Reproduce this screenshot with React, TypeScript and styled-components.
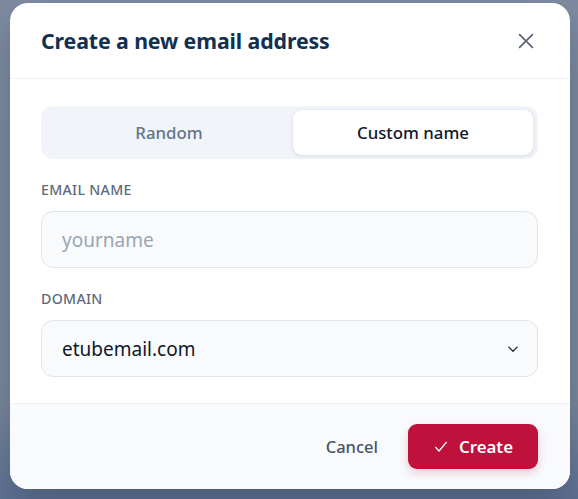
import styled, { createGlobalStyle } from "styled-components";
import { useState } from "react";

const GlobalStyle = createGlobalStyle`
  html, body {
    margin: 0;
    padding: 0;
  }
  body {
    background: linear-gradient(180deg, #7f8ba0 0%, #7c899d 80%, #5f7394 100%);
    font-family: "Noto Sans", "Open Sans", Arial, sans-serif;
    min-height: 499px;
  }
  * {
    box-sizing: border-box;
  }
`;

const DOMAINS = ["etubemail.com"];

function App() {
  const [mode, setMode] = useState<"random" | "custom">("custom");

  return (
    <>
      <GlobalStyle />
      <Modal>
        <Header>
          <Title>Create a new email address</Title>
          <CloseButton aria-label="Close">
            <svg width="22" height="22" viewBox="0 0 24 24" fill="none">
              <path
                d="M5 5l14 14M19 5L5 19"
                stroke="#5b6472"
                strokeWidth="1.9"
                strokeLinecap="round"
              />
            </svg>
          </CloseButton>
        </Header>
        <Body>
          <Segment>
            <SegmentTab $active={mode === "random"} onClick={() => setMode("random")}>
              Random
            </SegmentTab>
            <SegmentTab $active={mode === "custom"} onClick={() => setMode("custom")}>
              Custom name
            </SegmentTab>
          </Segment>
          <Field>
            <Label>Email name</Label>
            <Input placeholder="yourname" />
          </Field>
          <Field>
            <Label>Domain</Label>
            <SelectWrap>
              <Select defaultValue={DOMAINS[0]}>
                {DOMAINS.map((d) => (
                  <option key={d}>{d}</option>
                ))}
              </Select>
              <Chevron width="18" height="18" viewBox="0 0 24 24" fill="none">
                <path
                  d="M6.5 9.5l5.5 5.5 5.5-5.5"
                  stroke="#1e293b"
                  strokeWidth="1.8"
                  strokeLinecap="round"
                  strokeLinejoin="round"
                />
              </Chevron>
            </SelectWrap>
          </Field>
        </Body>
        <Footer>
          <CancelButton>Cancel</CancelButton>
          <CreateButton>
            <svg width="16" height="16" viewBox="0 0 24 24" fill="none">
              <path
                d="M4 12.5l5 5.5L20 5"
                stroke="#fff"
                strokeWidth="2"
                strokeLinecap="round"
                strokeLinejoin="round"
              />
            </svg>
            Create
          </CreateButton>
        </Footer>
      </Modal>
    </>
  );
}

const Modal = styled.div`
  margin: 3px 0 0 10px;
  width: 560px;
  height: 486px;
  background: #ffffff;
  border-radius: 18px;
  overflow: hidden;
  display: flex;
  flex-direction: column;
  box-shadow: 0 20px 40px rgba(15, 23, 42, 0.25);
`;

const Header = styled.div`
  height: 76px;
  display: flex;
  align-items: center;
  justify-content: space-between;
  padding: 0 33px 0 31px;
  border-bottom: 1px solid #eef1f5;
`;

const Title = styled.h2`
  margin: 0;
  font-size: 21.3px;
  font-weight: 700;
  color: #12304f;
  letter-spacing: -0.1px;
`;

const CloseButton = styled.button`
  border: none;
  background: none;
  padding: 0;
  width: 22px;
  height: 22px;
  display: flex;
  align-items: center;
  justify-content: center;
  cursor: pointer;
`;

const Body = styled.div`
  flex: 1;
  padding: 27px 32px 0 31px;
  display: flex;
  flex-direction: column;
  gap: 21px;
`;

const Segment = styled.div`
  display: grid;
  grid-template-columns: 1fr 240px;
  height: 53px;
  padding: 4px 5px 4px 4px;
  background: #f1f5f9;
  border-radius: 12px;
`;

const SegmentTab = styled.button<{ $active: boolean }>`
  border: none;
  border-radius: 9px;
  font-family: inherit;
  font-size: 16.8px;
  font-weight: 500;
  cursor: pointer;
  background: ${(p) => (p.$active ? "#ffffff" : "transparent")};
  color: ${(p) => (p.$active ? "#0f172a" : "#64748b")};
  box-shadow: ${(p) =>
    p.$active ? "0 1px 4px rgba(15, 23, 42, 0.12)" : "none"};
`;

const Field = styled.div`
  display: flex;
  flex-direction: column;
  gap: 11px;
`;

const Label = styled.label`
  font-size: 14.2px;
  font-weight: 500;
  text-transform: uppercase;
  color: #5e6a7b;
  line-height: 20px;
  letter-spacing: 0.3px;
`;

const fieldBox = `
  width: 100%;
  height: 57px;
  border: 1.5px solid #dfe5ec;
  border-radius: 12px;
  background: #f8fafc;
  padding: 0 20px;
  font-family: inherit;
  font-size: 19px;
  color: #0f172a;
  outline: none;
`;

const Input = styled.input`
  ${fieldBox}
  &::placeholder {
    color: #9aa5b4;
  }
`;

const SelectWrap = styled.div`
  position: relative;
`;

const Select = styled.select`
  ${fieldBox}
  appearance: none;
  cursor: pointer;
`;

const Chevron = styled.svg`
  position: absolute;
  right: 16px;
  top: 50%;
  transform: translateY(-50%);
  pointer-events: none;
`;

const Footer = styled.div`
  height: 86px;
  margin-top: auto;
  display: flex;
  align-items: center;
  justify-content: flex-end;
  gap: 16px;
  padding: 0 32px;
  background: #f8fafc;
  border-top: 1px solid #eef1f5;
`;

const CancelButton = styled.button`
  border: none;
  background: none;
  font-family: inherit;
  font-size: 16.5px;
  font-weight: 500;
  color: #475569;
  padding: 0 14px;
  height: 45px;
  cursor: pointer;
`;

const CreateButton = styled.button`
  height: 45px;
  width: 130px;
  border: none;
  border-radius: 9px;
  background: #be123c;
  color: #ffffff;
  font-family: inherit;
  font-size: 16.8px;
  font-weight: 600;
  display: flex;
  align-items: center;
  justify-content: center;
  gap: 10px;
  cursor: pointer;
  box-shadow: 0 4px 10px rgba(190, 18, 60, 0.2);
`;

export default App;
